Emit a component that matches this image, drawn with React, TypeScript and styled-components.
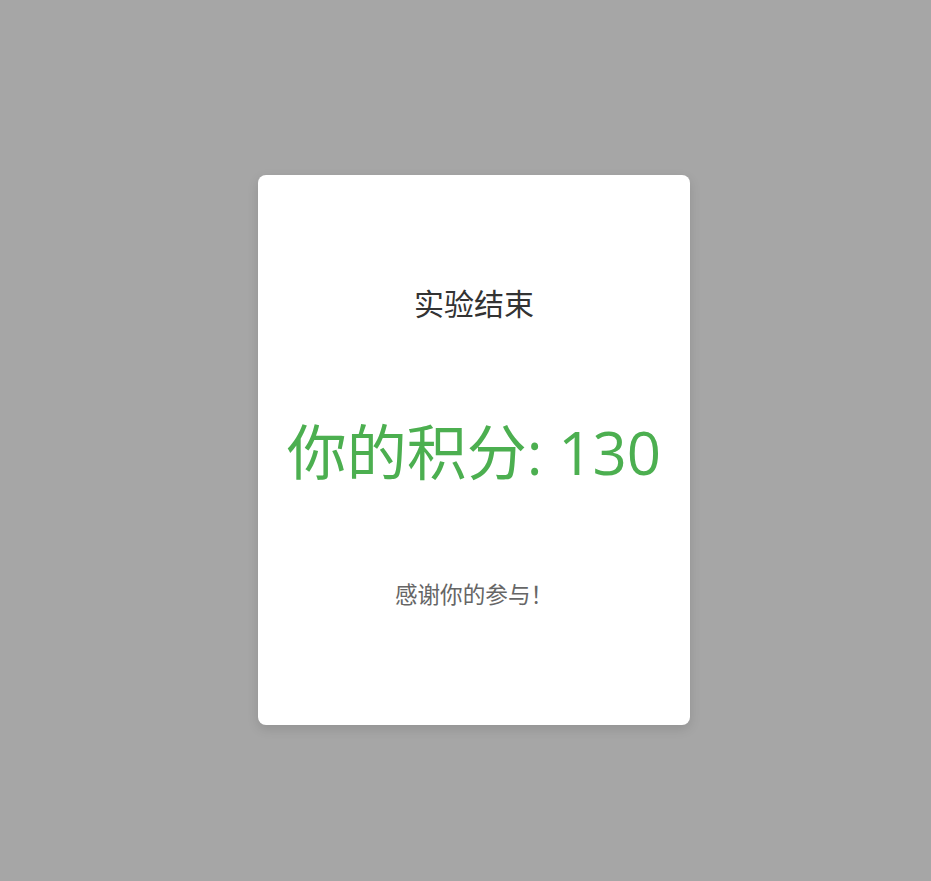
import React from "react";
import styled, { createGlobalStyle } from "styled-components";

const Global = createGlobalStyle`
  html, body { margin: 0; padding: 0; }
  body {
    background: #a6a6a6;
    font-family: "Open Sans", "Noto Sans CJK SC", sans-serif;
  }
`;

const Overlay = styled.div`
  width: 931px;
  height: 881px;
  display: flex;
  align-items: center;
  justify-content: center;
  background: #a6a6a6;
`;

const Card = styled.div`
  width: 432px;
  height: 550px;
  margin: 19px 0 0 17px;
  padding-bottom: 6px;
  box-sizing: border-box;
  background: #ffffff;
  border-radius: 8px;
  box-shadow: 0 4px 12px rgba(0, 0, 0, 0.12);
  display: flex;
  flex-direction: column;
  align-items: center;
  justify-content: center;
  gap: 94px;
`;

const Title = styled.h2`
  margin: 0;
  font-size: 30px;
  line-height: 36px;
  font-weight: 400;
  color: #333333;
`;

const Score = styled.div`
  font-size: 60px;
  line-height: 72px;
  color: #4caf50;
`;

const Thanks = styled.p`
  margin: 0;
  font-size: 22.6px;
  line-height: 26px;
  color: #666666;
`;

export default function App() {
  return (
    <>
      <Global />
      <Overlay>
        <Card>
          <Title>实验结束</Title>
          <Score>你的积分: 130</Score>
          <Thanks>感谢你的参与！</Thanks>
        </Card>
      </Overlay>
    </>
  );
}
